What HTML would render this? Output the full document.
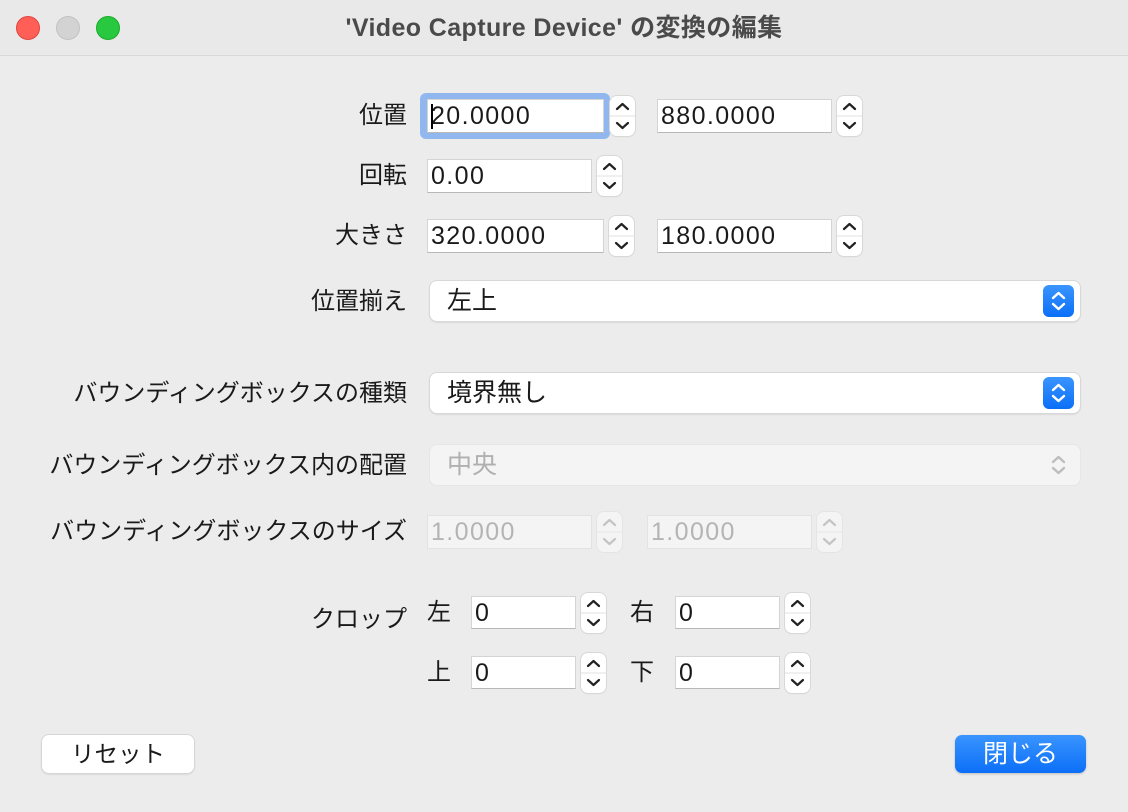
<!DOCTYPE html><html><head><meta charset="utf-8"><style>
*{margin:0;padding:0;box-sizing:border-box}
body{width:1128px;height:812px;background:#ececec;font-family:"Liberation Sans","Noto Sans CJK JP",sans-serif;position:relative;overflow:hidden;color:#1a1a1a}
.a{position:absolute}
.title{left:0;top:0;width:1128px;height:56px;background:#e9e9e9;border-bottom:1px solid #d9d9d9;text-align:center;line-height:56px;font-size:25px;letter-spacing:0.4px;font-weight:bold;color:#4a4a4a}
.tl{width:24px;height:24px;border-radius:50%;top:16px}
.lbl{font-size:24px;text-align:right;right:721px;white-space:nowrap;line-height:30px}
.f{background:#fff;border:1px solid #d4d4d4;border-bottom-color:#b8b8b8;font-size:25px;letter-spacing:1.4px;line-height:32px;padding-left:3px;height:34px}
.f.d{background:#f4f4f4;color:#b4b4b4;border-color:#e2e2e2}
.st{width:25px;height:40px;background:#fff;border-radius:7px;box-shadow:0 0 0 1px #d8d8d8,0 1px 1px rgba(0,0,0,.12)}
.st.d{background:#f4f4f4;box-shadow:0 0 0 1px #e4e4e4}
.pop{left:430px;width:650px;height:40px;background:#fff;border-radius:7px;box-shadow:0 0 0 1px #d8d8d8,0 1px 2px rgba(0,0,0,.18);font-size:25px;line-height:40px;padding-left:17px}
.pop.d{background:#f4f4f4;color:#b0b0b0;box-shadow:0 0 0 1px #e6e6e6}
.bb{right:6px;top:4px;width:31px;height:32px;background:linear-gradient(#3a95ff,#0b6ff7);border-radius:6px}
.btn{height:38px;border-radius:7px;text-align:center;line-height:38px}
.c{font-size:24px;line-height:30px}
</style></head><body>
<div class="a title">'Video Capture Device' の変換の編集</div>
<div class="a tl" style="left:16px;background:#ff5f57;border:1px solid #e0443e"></div>
<div class="a tl" style="left:56px;background:#d3d3d3;border:1px solid #c2c2c2"></div>
<div class="a tl" style="left:96px;background:#28c840;border:1px solid #1aab29"></div>

<svg width="0" height="0" style="position:absolute"><defs>
<g id="ar"><path d="M7 13 L12.5 8 L18 13 M7 27 L12.5 32 L18 27" fill="none" stroke="#222" stroke-width="2.2" stroke-linecap="round" stroke-linejoin="round"/><line x1="0" y1="20" x2="25" y2="20" stroke="#e0e0e0"/></g>
<g id="ard"><path d="M7 13 L12.5 8 L18 13 M7 27 L12.5 32 L18 27" fill="none" stroke="#c4c4c4" stroke-width="2.2" stroke-linecap="round" stroke-linejoin="round"/><line x1="0" y1="20" x2="25" y2="20" stroke="#e6e6e6"/></g>
</defs></svg>

<div class="a lbl" style="top:101px">位置</div>
<div class="a" style="left:420px;top:93px;width:190px;height:46px;border-radius:6px;background:#90b8ee"></div>
<div class="a f" style="left:427px;top:99px;width:177px">20.0000</div>
<div class="a" style="left:431px;top:104px;width:2px;height:25px;background:#000"></div>
<div class="a st" style="left:610px;top:96px"><svg width="25" height="40"><use href="#ar"/></svg></div>
<div class="a f" style="left:657px;top:99px;width:175px">880.0000</div>
<div class="a st" style="left:837px;top:96px"><svg width="25" height="40"><use href="#ar"/></svg></div>

<div class="a lbl" style="top:161px">回転</div>
<div class="a f" style="left:427px;top:159px;width:165px">0.00</div>
<div class="a st" style="left:597px;top:156px"><svg width="25" height="40"><use href="#ar"/></svg></div>

<div class="a lbl" style="top:221px">大きさ</div>
<div class="a f" style="left:427px;top:219px;width:177px">320.0000</div>
<div class="a st" style="left:609px;top:216px"><svg width="25" height="40"><use href="#ar"/></svg></div>
<div class="a f" style="left:657px;top:219px;width:175px">180.0000</div>
<div class="a st" style="left:837px;top:216px"><svg width="25" height="40"><use href="#ar"/></svg></div>

<div class="a lbl" style="top:287px">位置揃え</div>
<div class="a pop" style="top:281px">左上<div class="a bb"><svg width="31" height="32"><path d="M10 13 L15.5 8 L21 13 M10 19 L15.5 24 L21 19" fill="none" stroke="#fff" stroke-width="2.4" stroke-linecap="round" stroke-linejoin="round"/></svg></div></div>

<div class="a lbl" style="top:379px">バウンディングボックスの種類</div>
<div class="a pop" style="top:373px">境界無し<div class="a bb"><svg width="31" height="32"><path d="M10 13 L15.5 8 L21 13 M10 19 L15.5 24 L21 19" fill="none" stroke="#fff" stroke-width="2.4" stroke-linecap="round" stroke-linejoin="round"/></svg></div></div>

<div class="a lbl" style="top:451px">バウンディングボックス内の配置</div>
<div class="a pop d" style="top:445px">中央<div class="a" style="right:6px;top:4px;width:31px;height:32px"><svg width="31" height="32"><path d="M10 13 L15.5 8 L21 13 M10 19 L15.5 24 L21 19" fill="none" stroke="#bdbdbd" stroke-width="2.4" stroke-linecap="round" stroke-linejoin="round"/></svg></div></div>

<div class="a lbl" style="top:517px">バウンディングボックスのサイズ</div>
<div class="a f d" style="left:427px;top:515px;width:165px">1.0000</div>
<div class="a st d" style="left:597px;top:512px"><svg width="25" height="40"><use href="#ard"/></svg></div>
<div class="a f d" style="left:647px;top:515px;width:165px">1.0000</div>
<div class="a st d" style="left:817px;top:512px"><svg width="25" height="40"><use href="#ard"/></svg></div>

<div class="a lbl" style="top:605px">クロップ</div>
<div class="a c" style="left:427px;top:598px">左</div>
<div class="a f" style="left:471px;top:596px;width:105px;height:33px">0</div>
<div class="a st" style="left:581px;top:593px"><svg width="25" height="40"><use href="#ar"/></svg></div>
<div class="a c" style="left:630px;top:598px">右</div>
<div class="a f" style="left:675px;top:596px;width:105px;height:33px">0</div>
<div class="a st" style="left:785px;top:593px"><svg width="25" height="40"><use href="#ar"/></svg></div>
<div class="a c" style="left:427px;top:658px">上</div>
<div class="a f" style="left:471px;top:656px;width:105px;height:33px">0</div>
<div class="a st" style="left:581px;top:653px"><svg width="25" height="40"><use href="#ar"/></svg></div>
<div class="a c" style="left:630px;top:658px">下</div>
<div class="a f" style="left:675px;top:656px;width:105px;height:33px">0</div>
<div class="a st" style="left:785px;top:653px"><svg width="25" height="40"><use href="#ar"/></svg></div>

<div class="a btn" style="left:42px;top:735px;width:152px;font-size:23.5px;background:#fff;box-shadow:0 0 0 1px #d6d6d6,0 1px 2px rgba(0,0,0,.18)">リセット</div>
<div class="a btn" style="left:955px;top:735px;width:131px;font-size:25px;background:linear-gradient(#3a95ff,#0b6ff7);color:#fff;box-shadow:0 1px 2px rgba(0,0,0,.2)">閉じる</div>
</body></html>
